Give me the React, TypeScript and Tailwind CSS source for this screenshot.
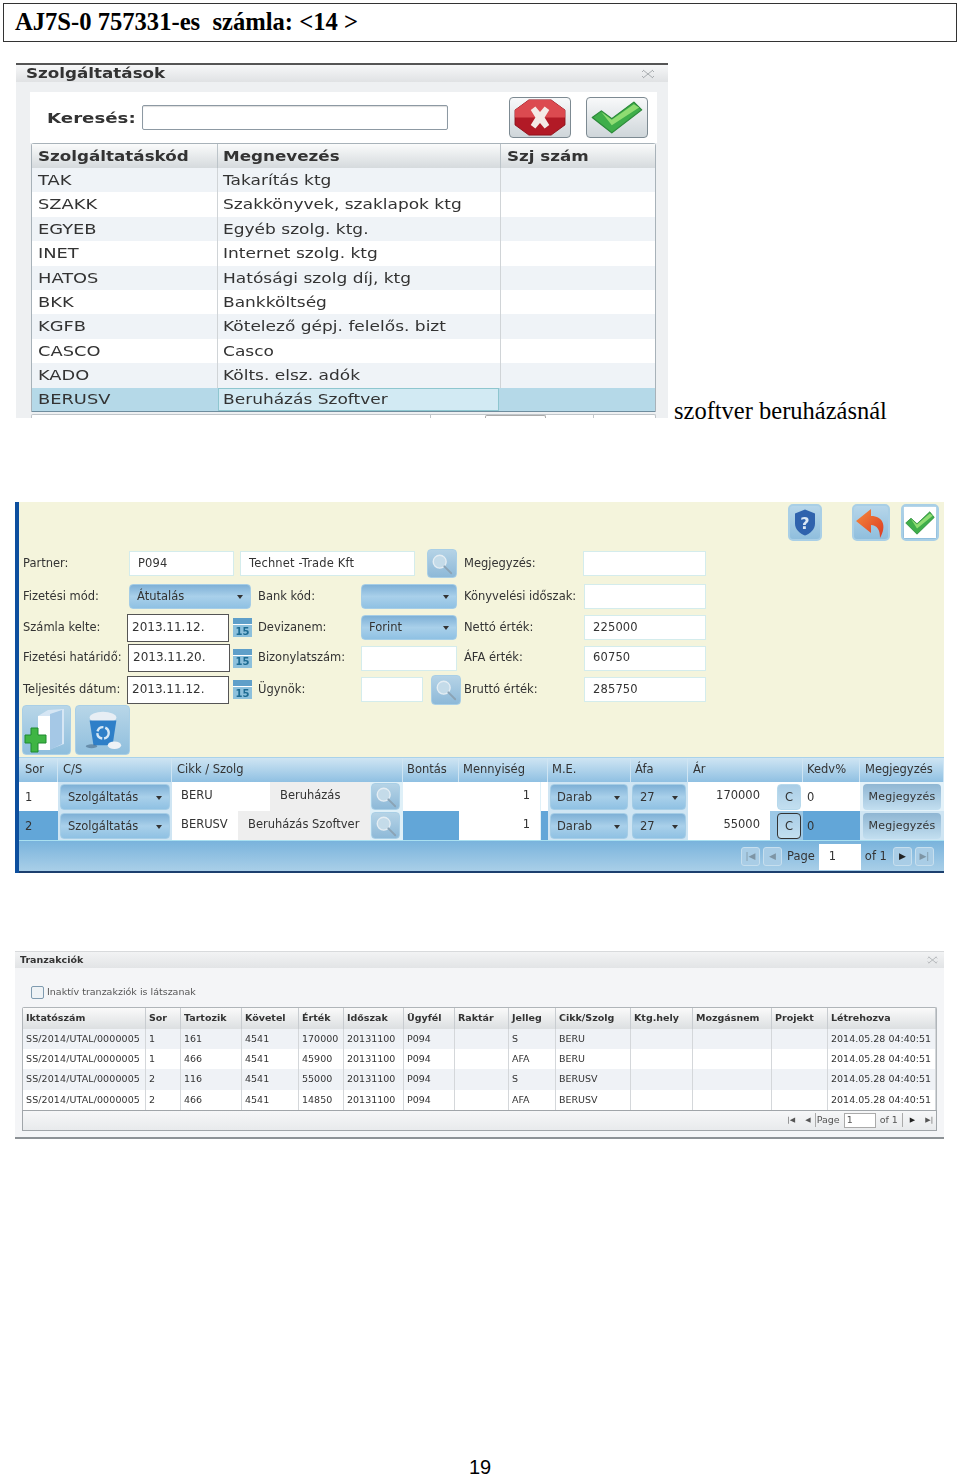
import type { ReactNode } from 'react'

const ui = "font-['DejaVu_Sans',sans-serif]"
const serif = "font-['Liberation_Serif',serif]"
// the first dialog is a stretched bitmap in the picture, so its glyphs are wider than they are tall
const stretchHead = 'inline-block origin-left scale-x-[1.24] whitespace-nowrap'
const stretchCode = 'inline-block origin-left scale-x-[1.32] whitespace-nowrap'
const stretchName = 'inline-block origin-left scale-x-[1.26] whitespace-nowrap'

function Magnifier({ className }: { className: string }) {
  return (
    <div className={`flex shrink-0 items-center justify-center rounded-[4px] border border-[#a9cfe6] bg-linear-to-b from-[#b5d3e6] to-[#8db9d8] ${className}`}>
      <svg viewBox="0 0 26 26" className="h-[24px] w-[24px]" fill="none">
        <circle cx="10.5" cy="10.5" r="7" fill="#c4dbe9" stroke="#e4edf3" strokeWidth="1.5" />
        <path d="M15.5 15.5 23 23" stroke="#8ba3b5" strokeWidth="2" strokeLinecap="round" />
      </svg>
    </div>
  )
}

function Calendar({ className }: { className: string }) {
  return (
    <div className={`flex h-[19px] w-[19px] shrink-0 flex-col ${className}`}>
      <div className="h-[6px] bg-[#5f9fc9]" />
      <div className={`flex h-[13px] items-center justify-center border-t border-white bg-[#8cc0dc] text-[10px] font-bold text-[#1d6b92] ${ui}`}>15</div>
    </div>
  )
}

function Input({ className, children }: { className: string; children?: ReactNode }) {
  return (
    <div className={`flex h-[25px] shrink-0 items-center border border-[#d4ecec] bg-white pl-[8px] text-[11.5px] tracking-[0.15px] text-[#333] ${className}`}>
      {children}
    </div>
  )
}

function DateInput({ className, children }: { className?: string; children: ReactNode }) {
  return (
    <div className={`flex h-[28px] w-[102px] shrink-0 items-center border border-[#555] bg-white pb-[2px] pl-[4px] text-[12px] text-[#333] ${className}`}>
      {children}
    </div>
  )
}

function Combo({ className, children }: { className: string; children?: ReactNode }) {
  return (
    <div className={`flex h-[25px] shrink-0 items-center justify-between rounded-[4px] border border-[#a5cde6] bg-linear-to-b from-[#7eb0d6] via-[#a9d0ea] to-[#8fc1e3] px-[7px] text-[11.5px] text-[#333] ${className}`}>
      <span>{children}</span>
      <span className="h-0 w-0 border-x-[3.5px] border-t-[4px] border-x-transparent border-t-[#333]" />
    </div>
  )
}

function Label({ className, children }: { className: string; children: ReactNode }) {
  return <div className={`shrink-0 whitespace-nowrap text-[11.5px] text-[#333] ${className}`}>{children}</div>
}

function IconButton({ className, children }: { className: string; children: ReactNode }) {
  return (
    <div className={`flex shrink-0 items-center justify-center rounded-[5px] border-2 border-[#a9cfe6] bg-linear-to-b from-[#b6d6ea] to-[#8fbedd] ${className}`}>
      {children}
    </div>
  )
}

function CheckIcon({ className }: { className: string }) {
  return (
    <svg viewBox="0 0 40 30" className={className} preserveAspectRatio="none">
      <path d="M1 15 8 9 16 16 33 1 39 8 16 29Z" fill="#3fae4a" stroke="#2c8a3a" strokeWidth="1" strokeLinejoin="round" />
      <path d="M8 10 16 17 33 3 37 6 16 22Z" fill="#8fdc72" />
    </svg>
  )
}

function CloseIcon({ className }: { className: string }) {
  return (
    <svg viewBox="0 0 14 10" className={className} fill="none" stroke="#a9adb0" strokeWidth="1">
      <path d="M2 1 12 9M12 1 2 9M1 3 3 1M11 1 13 3M1 7 3 9M11 9 13 7" />
    </svg>
  )
}

const services = [
  ['TAK', 'Takarítás ktg'],
  ['SZAKK', 'Szakkönyvek, szaklapok ktg'],
  ['EGYEB', 'Egyéb szolg. ktg.'],
  ['INET', 'Internet szolg. ktg'],
  ['HATOS', 'Hatósági szolg díj, ktg'],
  ['BKK', 'Bankköltség'],
  ['KGFB', 'Kötelező gépj. felelős. bizt'],
  ['CASCO', 'Casco'],
  ['KADO', 'Költs. elsz. adók'],
]

function ServiceDialog() {
  return (
    <div className={`h-[355px] w-[652px] shrink-0 overflow-hidden border-t-2 border-[#555] bg-[#eef0f2] blur-[0.35px] ${ui} text-[#333]`}>
      <div className="flex h-[17px] items-center justify-between bg-linear-to-b from-[#f6f7f8] to-[#e0e2e4] pl-[10px] pr-[13px]">
        <span className={`text-[13.5px] font-bold ${stretchHead}`}>Szolgáltatások</span>
        <CloseIcon className="h-[10px] w-[14px]" />
      </div>
      <div className="pl-[14px] pr-[11px] pt-[10px]">
        <div className="flex h-[51px] items-center bg-white">
          <div className="ml-[17px] w-[89px]">
            <span className="inline-block origin-left scale-x-[1.3] whitespace-nowrap text-[14px] font-bold">Keresés:</span>
          </div>
          <div className="ml-[6px] h-[25px] w-[306px] rounded-[2px] border border-[#8d99a3] bg-white shadow-[inset_0_1px_1px_#ddd]" />
          <div className="ml-[61px] flex h-[41px] w-[62px] items-center justify-center rounded-[4px] border border-[#7d8a92] bg-linear-to-b from-[#f8f9fa] to-[#cfd6da]">
            <svg viewBox="0 0 56 40" className="h-[37px] w-[56px]">
              <path d="M16 1H40L55 12V28L40 39H16L1 28V12Z" fill="#b21a26" stroke="#8d1019" />
              <path d="M16 1H40L55 12V20H1V12Z" fill="#dc4a50" />
              <path d="M18 12 23 8 28 14 33 8 38 12 33 20 38 28 33 32 28 26 23 32 18 28 23 20Z" fill="#f4e9e6" />
            </svg>
          </div>
          <div className="ml-[15px] flex h-[41px] w-[62px] items-center justify-center rounded-[4px] border border-[#7d8a92] bg-linear-to-b from-[#f8f9fa] to-[#cfd6da]">
            <CheckIcon className="h-[33px] w-[52px]" />
          </div>
        </div>
        <div className="ml-[1px] w-[625px] rounded-t-[3px] border-x border-t border-[#a8b2b9] bg-white">
          <div className="grid h-[24px] grid-cols-[186px_283px_1fr] bg-linear-to-b from-[#fafbfb] to-[#d5dadd] text-[13.5px] font-bold">
            <div className="flex items-center border-r border-[#bcc4c9] pl-[6px]"><span className={stretchHead}>Szolgáltatáskód</span></div>
            <div className="flex items-center border-r border-[#bcc4c9] pl-[5px]"><span className={stretchHead}>Megnevezés</span></div>
            <div className="flex items-center pl-[6px]"><span className={stretchHead}>Szj szám</span></div>
          </div>
          {services.map(([code, name], i) => (
            <div key={code} className={`grid h-[24.4px] grid-cols-[186px_283px_1fr] text-[13.5px] ${i % 2 === 0 ? 'bg-[#eff3f7]' : 'bg-white'}`}>
              <div className="flex items-center border-r border-[#d0d4d7] pl-[6px]"><span className={stretchCode}>{code}</span></div>
              <div className="flex items-center border-r border-[#d0d4d7] pl-[5px]"><span className={stretchName}>{name}</span></div>
              <div />
            </div>
          ))}
          <div className="grid h-[24px] grid-cols-[186px_283px_1fr] border-b border-[#6f8d9e] bg-[#b5d9e8] text-[13.5px]">
            <div className="flex items-center pl-[6px]"><span className={stretchCode}>BERUSV</span></div>
            <div className="mr-[2px] flex items-center border border-[#8ec6cf] bg-[#d2eaf3] pl-[4px]"><span className={stretchName}>Beruházás Szoftver</span></div>
            <div />
          </div>
        </div>
        <div className="ml-[1px] mt-[2px] flex h-[12px] w-[625px] rounded-t-[2px] border-x border-t border-[#c0c5c9] bg-white">
          <div className="ml-[398px] w-px bg-[#c0c5c9]" />
          <div className="ml-[54px] h-[8px] w-[61px] rounded-t-[2px] border-x border-t border-[#aaa]" />
          <div className="ml-[47px] w-px bg-[#c0c5c9]" />
        </div>
      </div>
    </div>
  )
}

const cols = 'grid-cols-[39px_114px_231px_56px_89px_83px_57px_115px_57px_1fr]'
const headers = ['Sor', 'C/S', 'Cikk / Szolg', 'Bontás', 'Mennyiség', 'M.E.', 'Áfa', 'Ár', 'Kedv%', 'Megjegyzés']

function ItemRow({ n, code, name, price, selected, wideCode }: { n: string; code: string; name: string; price: string; selected?: boolean; wideCode?: boolean }) {
  const bg = selected ? 'bg-[#62a6d8]' : 'bg-white'
  return (
    <div className={`grid h-[29px] ${cols} items-stretch text-[11.5px] text-[#333]`}>
      <div className={`flex items-center pl-[6px] pt-[2px] ${bg}`}>{n}</div>
      <div className="flex items-center bg-[#cfe5f3] px-[2px]">
        <Combo className="h-[26px] w-[110px] pt-[2px]">Szolgáltatás</Combo>
      </div>
      <div className="flex items-stretch bg-[#dff0f8]">
        <div className={`flex items-center bg-white pb-[2px] pl-[9px] ${wideCode ? 'w-[66px]' : 'w-[98px]'}`}>{code}</div>
        <div className={`flex items-center bg-[#eeeeee] pb-[2px] pl-[10px] whitespace-nowrap ${wideCode ? 'w-[132px]' : 'w-[100px]'}`}>{name}</div>
        <Magnifier className="ml-[1px] h-[27px] w-[29px] self-center" />
      </div>
      <div className={`${bg}`} />
      <div className="flex bg-[#dff0f8]">
        <div className="flex w-[81px] items-center justify-end bg-white pb-[2px] pr-[10px]">1</div>
        <div className={`ml-[1px] flex-1 ${selected ? 'bg-[#62a6d8]' : 'bg-white'}`} />
      </div>
      <div className="flex items-center bg-[#cfe5f3] px-[2px]">
        <Combo className="h-[26px] w-[78px] pt-[2px] !pl-[6px]">Darab</Combo>
      </div>
      <div className="flex items-center bg-[#cfe5f3] px-[1px]">
        <Combo className="h-[26px] w-[54px] pt-[2px]">27</Combo>
      </div>
      <div className={`flex ${selected ? 'bg-[#9cc8e6]' : 'bg-white'}`}>
        <div className="flex w-[82px] items-center justify-end bg-white pb-[2px] pr-[10px]">{price}</div>
        <div className={`ml-[7px] flex h-[26px] w-[24px] items-center justify-center self-center rounded-[4px] border bg-linear-to-b from-[#a9cde6] to-[#c3dff0] pt-[2px] text-[#333] ${selected ? 'border-[#333]' : 'border-[#b7d9ec]'}`}>C</div>
      </div>
      <div className={`flex items-center pl-[4px] pt-[2px] ${bg}`}>0</div>
      <div className={`flex items-center px-[3px] ${selected ? 'bg-[#cfe5f3]' : 'bg-[#e4f2f9]'}`}>
        <div className="flex h-[26px] w-[78px] items-center justify-center rounded-[4px] bg-linear-to-b from-[#8fb6d3] to-[#c3dff0] pt-[2px] text-[11px] tracking-[0.2px]">Megjegyzés</div>
      </div>
    </div>
  )
}

function InvoiceScreen() {
  return (
    <div className={`h-[371px] w-[929px] shrink-0 border-l-[4px] border-[#0d4f9e] bg-[#f4f4dc] blur-[0.35px] ${ui}`}>
      <div className="flex h-[45px] items-start pt-[2px]">
        <IconButton className="ml-[769px] h-[37px] w-[34px]">
          <svg viewBox="0 0 24 28" className="h-[29px] w-[24px]">
            <path d="M12 1 22 5V15C22 21 17 25 12 27 7 25 2 21 2 15V5Z" fill="#2f62ad" />
            <text x="12" y="20" textAnchor="middle" fontSize="16" fontWeight="bold" fill="#dce8f5" fontFamily="DejaVu Sans">?</text>
          </svg>
        </IconButton>
        <IconButton className="ml-[30px] h-[37px] w-[38px]">
          <svg viewBox="0 0 32 30" className="h-[32px] w-[32px]">
            <defs>
              <linearGradient id="backFill" x1="0" y1="0" x2="1" y2="1">
                <stop offset="0" stopColor="#f58a3c" />
                <stop offset="1" stopColor="#dc3a22" />
              </linearGradient>
            </defs>
            <path d="M16 1 1 13 16 25V17C22 17 25 22 25 30 32 18 28 8 16 8Z" fill="url(#backFill)" />
          </svg>
        </IconButton>
        <IconButton className="ml-[11px] h-[37px] w-[38px]">
          <div className="flex h-[31px] w-[32px] items-center justify-center bg-white">
            <CheckIcon className="h-[24px] w-[30px]" />
          </div>
        </IconButton>
      </div>

      <div className="flex h-[33px] items-center pl-[4px]">
        <Label className="w-[106px]">Partner:</Label>
        <Input className="w-[105px]">P094</Input>
        <Input className="ml-[6px] w-[175px]">Technet -Trade Kft</Input>
        <Magnifier className="ml-[12px] h-[29px] w-[30px]" />
        <Label className="ml-[7px] w-[119px]">Megjegyzés:</Label>
        <Input className="w-[123px]" />
      </div>
      <div className="flex h-[33px] items-center pl-[4px]">
        <Label className="w-[106px]">Fizetési mód:</Label>
        <Combo className="w-[122px]">Átutalás</Combo>
        <Label className="ml-[7px] w-[103px]">Bank kód:</Label>
        <Combo className="w-[96px]" />
        <Label className="ml-[7px] w-[120px]">Könyvelési időszak:</Label>
        <Input className="w-[122px]" />
      </div>
      <div className="flex h-[29px] items-center pl-[4px]">
        <Label className="w-[104px]">Számla kelte:</Label>
        <DateInput>2013.11.12.</DateInput>
        <Calendar className="ml-[4px]" />
        <Label className="ml-[6px] w-[103px]">Devizanem:</Label>
        <Combo className="w-[96px]">Forint</Combo>
        <Label className="ml-[7px] w-[120px]">Nettó érték:</Label>
        <Input className="w-[122px]">225000</Input>
      </div>
      <div className="flex h-[32px] items-center pl-[4px]">
        <Label className="w-[105px]">Fizetési határidő:</Label>
        <DateInput>2013.11.20.</DateInput>
        <Calendar className="ml-[3px]" />
        <Label className="ml-[6px] w-[103px]">Bizonylatszám:</Label>
        <Input className="w-[96px]" />
        <Label className="ml-[7px] w-[120px]">ÁFA érték:</Label>
        <Input className="w-[122px]">60750</Input>
      </div>
      <div className="flex h-[31px] items-center pl-[4px]">
        <Label className="w-[104px]">Teljesités dátum:</Label>
        <DateInput>2013.11.12.</DateInput>
        <Calendar className="ml-[4px]" />
        <Label className="ml-[6px] w-[103px]">Ügynök:</Label>
        <Input className="w-[62px]" />
        <Magnifier className="ml-[8px] h-[30px] w-[30px]" />
        <Label className="ml-[3px] w-[120px]">Bruttó érték:</Label>
        <Input className="w-[122px]">285750</Input>
      </div>

      <div className="flex h-[52px] items-start gap-[4px] pl-[3px]">
        <div className="flex h-[50px] w-[49px] items-center justify-center rounded-[4px] border border-[#a9cfe6] bg-linear-to-b from-[#b8d6e8] to-[#8fbedd]">
          <svg viewBox="0 0 46 48" className="h-[48px] w-[46px]">
            <path d="M14 10 24 4 40 3V38L24 44H14Z" fill="#d6e6f4" />
            <path d="M14 10H26V44H14Z" fill="#ffffff" />
            <path d="M26 8 38 4V38L26 44Z" fill="#a5c8e6" />
            <path d="M7 22H14V29H22V37H14V46H7V37H1V29H7Z" fill="#3fb544" stroke="#1f8a2e" strokeWidth="1" />
          </svg>
        </div>
        <div className="flex h-[50px] w-[55px] items-center justify-center rounded-[4px] border border-[#a9cfe6] bg-linear-to-b from-[#b8d6e8] to-[#8fbedd]">
          <svg viewBox="0 0 46 44" className="h-[42px] w-[46px]">
            <ellipse cx="23" cy="9" rx="14" ry="6" fill="#e8eef4" />
            <path d="M9 12H37L33 38H13Z" fill="#2e7fc8" />
            <circle cx="23" cy="25" r="6" fill="none" stroke="#d5e8f6" strokeWidth="2.5" strokeDasharray="8 2" />
            <ellipse cx="35" cy="38" rx="7" ry="4" fill="#eef2f6" />
            <ellipse cx="11" cy="39" rx="6" ry="2" fill="#3a5a78" opacity="0.5" />
          </svg>
        </div>
      </div>

      <div className={`grid h-[25px] ${cols} border-t border-[#a9d2ea] bg-linear-to-b from-[#cfe5f3] to-[#8fc0e2] text-[11.5px] text-[#333]`}>
        {headers.map((h, i) => (
          <div key={h} className={`flex items-center border-r border-[#cfe5f3] ${i === 0 ? 'pl-[6px]' : i === 1 || i === 2 || i === 7 || i === 9 ? 'pl-[5px]' : 'pl-[4px]'}`}>{h}</div>
        ))}
      </div>
      <ItemRow n="1" code="BERU" name="Beruházás" price="170000" />
      <ItemRow n="2" code="BERUSV" name="Beruházás Szoftver" price="55000" selected wideCode />
      <div className="flex h-[33px] items-center border-b-2 border-t border-b-[#1c3f6e] border-t-[#a9e0f0] bg-linear-to-b from-[#79b3dc] to-[#a9cfe8] pl-[722px] pt-[1px] text-[11.5px] text-[#333]">
        <PagerBtn glyph="|◀" className="" />
        <PagerBtn glyph="◀" className="ml-[3px]" />
        <span className="ml-[5px]">Page</span>
        <div className="ml-[4px] flex h-[26px] w-[42px] items-center bg-white pl-[10px]">1</div>
        <span className="ml-[4px]">of 1</span>
        <PagerBtn glyph="▶" dark className="ml-[6px]" />
        <PagerBtn glyph="▶|" className="ml-[3px]" />
      </div>
    </div>
  )
}

function PagerBtn({ glyph, dark, className }: { glyph: string; dark?: boolean; className: string }) {
  return (
    <div className={`flex h-[19px] w-[19px] items-center justify-center rounded-[3px] border border-[#c7dfee] bg-[#a9cde6] text-[9px] leading-none ${dark ? 'text-[#222]' : 'text-[#7e95a5]'} ${className}`}>
      {glyph}
    </div>
  )
}

const txCols = 'grid-cols-[123px_35px_61px_57px_45px_60px_51px_54px_47px_75px_62px_79px_56px_1fr]'
const txHeaders = ['Iktatószám', 'Sor', 'Tartozik', 'Követel', 'Érték', 'Időszak', 'Ügyfél', 'Raktár', 'Jelleg', 'Cikk/Szolg', 'Ktg.hely', 'Mozgásnem', 'Projekt', 'Létrehozva']
const txRows = [
  ['SS/2014/UTAL/0000005', '1', '161', '4541', '170000', '20131100', 'P094', '', 'S', 'BERU', '', '', '', '2014.05.28 04:40:51'],
  ['SS/2014/UTAL/0000005', '1', '466', '4541', '45900', '20131100', 'P094', '', 'AFA', 'BERU', '', '', '', '2014.05.28 04:40:51'],
  ['SS/2014/UTAL/0000005', '2', '116', '4541', '55000', '20131100', 'P094', '', 'S', 'BERUSV', '', '', '', '2014.05.28 04:40:51'],
  ['SS/2014/UTAL/0000005', '2', '466', '4541', '14850', '20131100', 'P094', '', 'AFA', 'BERUSV', '', '', '', '2014.05.28 04:40:51'],
]

function TransactionDialog() {
  return (
    <div className={`h-[188px] w-[929px] shrink-0 border-b-2 border-t border-b-[#8d9296] border-t-[#d8dadc] bg-[#f4f5f7] text-[#333] blur-[0.35px] ${ui}`}>
      <div className="flex h-[16px] items-center justify-between bg-linear-to-b from-[#f2f3f4] to-[#e2e4e6] pl-[5px] pr-[6px]">
        <span className="pt-[1px] text-[9.5px] font-bold">Tranzakciók</span>
        <CloseIcon className="h-[8px] w-[11px]" />
      </div>
      <div className="flex h-[39px] items-center pl-[16px] pt-[9px]">
        <div className="h-[13px] w-[13px] rounded-[2px] border border-[#7f9bb0] bg-[#eef2f5]" />
        <span className="ml-[3px] text-[9.5px] text-[#555]">Inaktív tranzakziók is látszanak</span>
      </div>
      <div className="ml-[7px] w-[915px] rounded-t-[2px] border-x border-t border-[#b0b5b9] bg-white">
        <div className={`grid h-[21px] ${txCols} bg-linear-to-b from-[#fafafa] to-[#dcdfe1] text-[9.5px] font-bold`}>
          {txHeaders.map((h) => (
            <div key={h} className="flex items-center border-r border-[#c8ccd0] pl-[3px]">{h}</div>
          ))}
        </div>
        {txRows.map((row, i) => (
          <div key={i} className={`grid h-[20.2px] ${txCols} text-[9.5px] ${i % 2 === 0 ? 'bg-[#eff2f6]' : 'bg-white'}`}>
            {row.map((c, j) => (
              <div key={j} className={`flex items-center border-r border-[#d4d7da] pl-[3px] whitespace-nowrap ${j === 0 ? 'tracking-[0.1px]' : ''}`}>{c}</div>
            ))}
          </div>
        ))}
      </div>
      <div className="ml-[7px] flex h-[21px] w-[915px] items-center justify-end border border-[#a0a5a9] bg-linear-to-b from-[#f6f7f8] to-[#e8eaec] pr-[3px] text-[9.5px] text-[#555]">
        <span className="text-[7px]">|◀</span>
        <span className="ml-[10px] text-[7px]">◀</span>
        <span className="ml-[4px] h-[14px] w-px bg-[#aaa]" />
        <span className="ml-[1px]">Page</span>
        <div className="ml-[4px] flex h-[15px] w-[32px] items-center border border-[#aaa] bg-white pl-[2px]">1</div>
        <span className="ml-[4px]">of 1</span>
        <span className="ml-[4px] h-[14px] w-px bg-[#aaa]" />
        <span className="ml-[7px] text-[7px] text-[#222]">▶</span>
        <span className="ml-[10px] text-[7px]">▶|</span>
      </div>
    </div>
  )
}

export default function App() {
  return (
    <div className="h-[1479px] w-[960px] overflow-hidden bg-white pt-[3px]">
      <div className={`mx-[3px] flex h-[39px] items-center border border-[#333] pl-[11px] text-[24.6px] font-bold text-black whitespace-pre ${serif}`}>
        AJ7S-0 757331-es  számla: &lt;14 &gt;
      </div>

      <div className="mt-[21px] flex h-[355px] pl-[16px]">
        <ServiceDialog />
        <span className={`ml-[6px] mt-[334px] whitespace-nowrap text-[24.5px] leading-[28px] text-black ${serif}`}>szoftver beruházásnál</span>
      </div>

      <div className="ml-[15px] mt-[84px]">
        <InvoiceScreen />
      </div>

      <div className="ml-[15px] mt-[78px]">
        <TransactionDialog />
      </div>

      <div className="mt-[317px] text-center text-[20px] leading-[23px] text-black font-['Liberation_Sans',sans-serif]">19</div>
    </div>
  )
}
